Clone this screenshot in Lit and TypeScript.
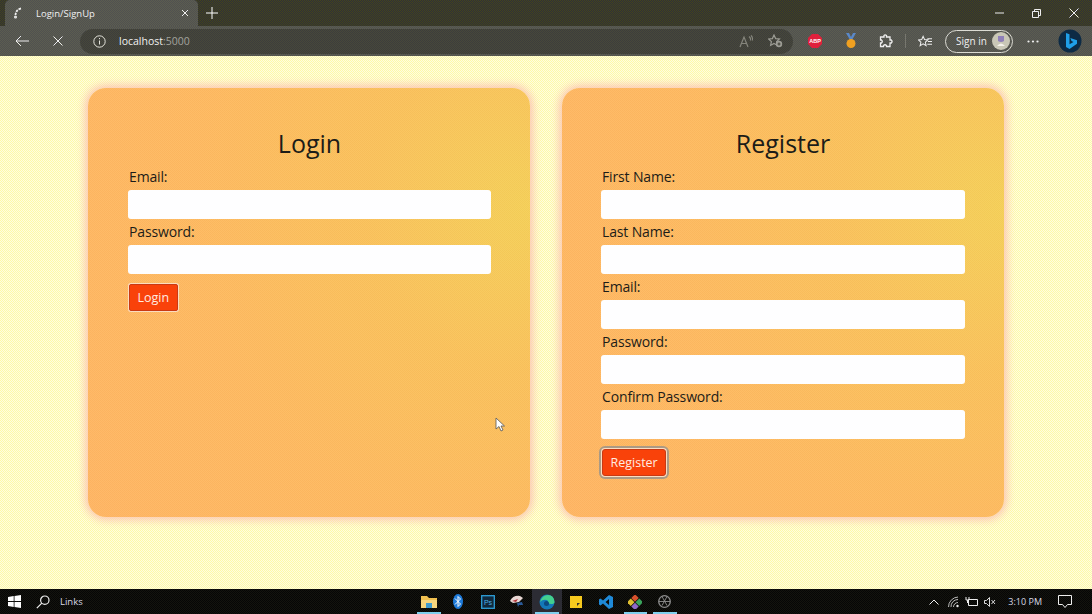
import { LitElement, html, svg, css } from 'lit'
import { customElement } from 'lit/decorators.js'

@customElement('app-root')
export class AppRoot extends LitElement {
  static styles = css`
    :host {
      display: flex;
      flex-direction: column;
      height: 100vh;
      overflow: hidden;
      position: relative;
      font-family: 'Open Sans', 'Noto Sans', sans-serif;
      background: #fdfbb5;
    }
    svg { display: block; }

    /* window chrome */
    .tabstrip {
      height: 26px;
      flex: none;
      display: flex;
      background: repeating-conic-gradient(#2f3038 0 25%, #44441c 0 50%) 0 0 / 2px 2px;
      color: #f0f0f0;
    }
    .tab {
      width: 193px;
      margin-left: 5px;
      display: flex;
      align-items: center;
      background: repeating-conic-gradient(#505150 0 25%, #5c5d50 0 50%) 0 0 / 2px 2px;
      border-radius: 5px 5px 0 0;
      font-size: 9.5px;
      padding: 0 9px 0 8px;
      box-sizing: border-box;
    }
    .tab span { flex: 1; margin-left: 13px; }
    .plus { width: 28px; display: flex; align-items: center; justify-content: center; }
    .winctl { margin-left: auto; display: flex; }
    .winctl div { width: 37px; height: 26px; display: flex; align-items: center; justify-content: center; }

    .toolbar {
      height: 30px;
      flex: none;
      display: flex;
      align-items: center;
      background: repeating-conic-gradient(#505150 0 25%, #5c5d50 0 50%) 0 0 / 2px 2px;
      color: #f0f0f0;
      box-sizing: border-box;
      padding-left: 12px;
    }
    .tool { display: flex; align-items: center; justify-content: center; flex: none; }
    .addr {
      width: 713px;
      height: 25px;
      margin-left: 5px;
      background: repeating-conic-gradient(#3c3d3c 0 25%, #48483a 0 50%) 0 0 / 2px 2px;
      border-radius: 13px;
      display: flex;
      align-items: center;
      font-size: 10.5px;
      padding-left: 13px;
      box-sizing: border-box;
    }
    .addr .url { margin-left: 13px; flex: 1; }
    .addr .url i { font-style: normal; color: #a3a39c; }
    .signin {
      width: 68px;
      height: 23px;
      margin-left: 13px;
      border: 1px solid #dcdcd4;
      border-radius: 12px;
      box-sizing: border-box;
      display: flex;
      align-items: center;
      justify-content: space-between;
      font-size: 10px;
      padding: 0 2px 0 10px;
      white-space: nowrap;
    }
    .avatar { width: 18px; height: 18px; border-radius: 50%; background: #c9c7b6; display: flex; align-items: center; justify-content: center; }

    /* page */
    .page {
      flex: 1;
      display: flex;
      justify-content: center;
      gap: 32px;
      padding-top: 32px;
      box-sizing: border-box;
      background: repeating-conic-gradient(#fffde0 0 25%, #fdf9a8 0 50%) 0 0 / 2px 2px;
    }
    .card {
      width: 442px;
      height: 429px;
      box-sizing: border-box;
      padding: 37px 39px 0 40px;
      border-radius: 18px;
      background:
        repeating-conic-gradient(rgba(255, 255, 255, 0.05) 0 25%, rgba(200, 120, 90, 0.04) 0 50%) 0 0 / 2px 2px,
        radial-gradient(circle at 100% 28%, #f5d056 0%, #fac25a 30%, #feb95f 62%, #ffb562 100%);
      box-shadow: 0 0 9px 3px #fcc6b4;
      color: #1c1c18;
    }
    .card.register { padding-left: 39px; }
    h2 {
      margin: 0 0 7px;
      font-size: 25px;
      line-height: 36px;
      font-weight: 400;
      text-align: center;
    }
    label {
      display: block;
      font-size: 14px;
      letter-spacing: -0.15px;
      line-height: 18px;
      padding-left: 1px;
      margin-bottom: 4px;
    }
    .input {
      height: 29px;
      background: #fefeff;
      border-radius: 3px;
      margin-bottom: 4px;
    }
    .btn {
      display: inline-flex;
      align-items: center;
      height: 27px;
      margin: 6px 0 0 1px;
      padding: 0 7.5px;
      background: #f9420a;
      color: #ffece2;
      border: 1px solid #c93a14;
      box-shadow: 0 0 0 1px #fbdcc0;
      border-radius: 2px;
      font-size: 12.5px;
      box-sizing: border-box;
    }
    .btn.focus { box-shadow: 0 0 0 1px #fbdcc0, 0 0 0 3px #ab9a84; border-radius: 3px; }

    /* taskbar */
    .taskbar {
      height: 25px;
      flex: none;
      display: flex;
      align-items: center;
      background: repeating-conic-gradient(#060606 0 25%, #14140e 0 50%) 0 0 / 2px 2px;
      color: #d8d8e4;
      font-size: 9.5px;
    }
    .tb-left { width: 414px; display: flex; align-items: center; flex: none; }
    .tb-left .links { margin-left: 10px; }
    .tb-icons { display: flex; flex: none; height: 25px; }
    .tb-icon {
      width: 29.5px;
      height: 25px;
      position: relative;
      display: flex;
      align-items: center;
      justify-content: center;
    }
    .tb-icon.open::after {
      content: '';
      position: absolute;
      left: 3px;
      right: 3px;
      bottom: 0;
      height: 2px;
      background: #7fd0ee;
    }
    .tb-icon.active { background: #2c2c34; }
    .tray { flex: 1; display: flex; align-items: center; justify-content: flex-end; }
    .time { margin: 0 16px 0 12px; white-space: nowrap; font-size: 9px; }

    .cursor { position: absolute; left: 495px; top: 417px; }
  `

  private _field(name: string) {
    return html`<label>${name}</label><div class="input"></div>`
  }

  private _chrome() {
    return html`
      <div class="tabstrip">
        <div class="tab">
          <svg width="10" height="12" viewBox="0 0 10 12" fill="none" stroke="#eee" stroke-width="1.8"><path d="M8 1.500Q3 2.500 2.500 8" stroke-dasharray="2.500 1" /><circle cx="2.500" cy="10" r=".6" /></svg>
          <span>Login/SignUp</span>
          <svg width="8" height="8" viewBox="0 0 8 8" stroke="#eee"><path d="M1 1l6 6M7 1l-6 6" /></svg>
        </div>
        <div class="plus"><svg width="12" height="12" viewBox="0 0 12 12" stroke="#fff"><path d="M6 0v12M0 6h12" /></svg></div>
        <div class="winctl">
          <div><svg width="9" height="2" stroke="#eee"><path d="M0 1h9" /></svg></div>
          <div><svg width="9" height="9" viewBox="0 0 9 9" fill="none" stroke="#eee"><path d="M.5 2.500h6v6h-6zM2.500 2.500v-2h6v6h-2" /></svg></div>
          <div><svg width="10" height="10" viewBox="0 0 10 10" stroke="#eee"><path d="M.5.5l9 9M9.500.5l-9 9" /></svg></div>
        </div>
      </div>
      <div class="toolbar">
        <div class="tool" style="width:20px"><svg width="14" height="12" viewBox="0 0 14 12" fill="none" stroke="#eee"><path d="M14 6H1M6 1L1 6l5 5" /></svg></div>
        <div class="tool" style="width:35px;margin-left:8px"><svg width="10" height="10" viewBox="0 0 10 10" stroke="#eee"><path d="M.5.5l9 9M9.500.5l-9 9" /></svg></div>
        <div class="addr">
          <svg width="13" height="13" viewBox="0 0 13 13" fill="none" stroke="#e4e4dc"><circle cx="6.500" cy="6.500" r="5.700" /><path d="M6.500 5.500v4M6.500 3v1.200" /></svg>
          <div class="url">localhost<i>:5000</i></div>
          <div class="tool" style="width:14px;margin-right:15px">
            <svg width="14" height="13" viewBox="0 0 14 13" fill="none" stroke="#85857c" stroke-width="1.200"><path d="M1 12L5 2l4 10M2.500 8.500h5M10 1.500q2 1.500 1.500 4M12 .5q2 2 1.500 5" /></svg>
          </div>
          <div class="tool" style="width:15px;margin-right:10px">
            <svg width="15" height="14" viewBox="0 0 15 14" fill="none" stroke="#9c9c94" stroke-width="1.200"><path d="M6 1l1.600 3.600 3.800.4-2.800 2.600.8 3.800L6 9.500 2.600 11.400l.8-3.800L.6 5l3.800-.4z" /><circle cx="11" cy="10" r="3.200" fill="#9c9c94" stroke="none" /><path d="M9.500 10h3M11 8.500v3" stroke="#424238" /></svg>
          </div>
        </div>
        <div class="tool" style="width:14px;margin-left:15px">
          <svg width="14" height="14" viewBox="0 0 14 14"><path d="M4 0h6l4 4v6l-4 4H4l-4-4V4z" fill="#e0203c" /><text x="7" y="9.200" font-size="5.500" font-weight="700" font-family="Liberation Sans" text-anchor="middle" fill="#fff">ABP</text></svg>
        </div>
        <div class="tool" style="width:14px;margin-left:22px">
          <svg width="14" height="16" viewBox="0 0 14 16"><path d="M2 0l4 7h2l4-7H9L7 4 5 0z" fill="#5a88c8" /><circle cx="7" cy="10.500" r="4.500" fill="#f0a020" /></svg>
        </div>
        <div class="tool" style="width:14px;margin-left:21px">
          <svg width="14" height="14" viewBox="0 0 14 14" fill="none" stroke="#eee" stroke-width="1.300"><path d="M5 1.500q1-1.300 2.500 0V3h3.500v3h1.300q1.500 1.500 0 3H11v3.500H7.500v-1q-1.500-1.500-3 0v1H1.500V9h1q1.500-1.500 0-3h-1V3H5z" /></svg>
        </div>
        <div class="tool" style="width:1px;height:14px;margin-left:12px;background:#77776f"></div>
        <div class="tool" style="width:14px;margin-left:12px">
          <svg width="15" height="13" viewBox="0 0 15 13" fill="none" stroke="#eee" stroke-width="1.100"><path d="M5.500 1l1.500 3.400 3.600.4-2.700 2.500.8 3.600-3.200-1.900-3.200 1.900.8-3.600L.4 4.800 4 4.400zM10 3.500h5M10.500 6.500h4.500M10 9.500h5" /></svg>
        </div>
        <div class="signin"><span>Sign in</span><div class="avatar"><svg width="10" height="12" viewBox="0 0 10 12"><path d="M2 1h6v5q-3 2-6 0z" fill="#8f80b8" /><path d="M1 11q4-5 8 0z" fill="#f4f2ea" /></svg></div></div>
        <div class="tool" style="width:12px;margin-left:14px">
          <svg width="12" height="3" viewBox="0 0 12 3" fill="#eee"><circle cx="1.500" cy="1.500" r="1.100" /><circle cx="6" cy="1.500" r="1.100" /><circle cx="10.500" cy="1.500" r="1.100" /></svg>
        </div>
        <div class="tool" style="width:24px;margin-left:19px">
          <svg width="24" height="24" viewBox="0 0 24 24"><circle cx="12" cy="12" r="11.500" fill="#0d2b45" /><path d="M8 4l3.500 1.300v10l4-2.300-2-1-1.200-3 6.700 2.300v3.500L11.500 20 8 18z" fill="#1f9fe8" /></svg>
        </div>
      </div>
    `
  }

  private _taskbar() {
    const sq = (c: string) => svg`<rect width="7" height="7" fill=${c} />`
    return html`
      <div class="taskbar">
        <div class="tb-left">
          <div class="tool" style="width:13px;margin-left:8px">
            <svg width="13" height="13" viewBox="0 0 13 13" fill="#fff"><path d="M0 2l5.700-.9v5H0zM6.500 1L13 0v6.100H6.500zM0 6.900h5.700v5L0 11zM6.500 6.900H13V13l-6.500-1z" /></svg>
          </div>
          <div class="tool" style="width:14px;margin-left:15px">
            <svg width="14" height="14" viewBox="0 0 14 14" fill="none" stroke="#eee" stroke-width="1.200"><circle cx="8.800" cy="5.200" r="4.200" /><path d="M5.800 8.200L.8 13.200" /></svg>
          </div>
          <span class="links">Links</span>
        </div>
        <div class="tb-icons">
          <div class="tb-icon open">
            <svg width="16" height="14" viewBox="0 0 16 14"><path d="M0 1h6l2 2h8v10H0z" fill="#f0c050" /><rect y="5" width="16" height="8" fill="#f7d67e" /><rect x="5" y="8" width="6" height="5" fill="#3f9bd0" /></svg>
          </div>
          <div class="tb-icon">
            <svg width="10" height="15" viewBox="0 0 10 15"><ellipse cx="5" cy="7.500" rx="5" ry="7.500" fill="#1d79d8" /><path d="M2 4.500l5.500 5.500L5 12.500v-10L7.500 5 2 10.500" fill="none" stroke="#fff" /></svg>
          </div>
          <div class="tb-icon">
            <svg width="14" height="14" viewBox="0 0 14 14"><rect x=".7" y=".7" width="12.600" height="12.600" fill="#10283c" stroke="#2e9fd8" stroke-width="1.300" /><text x="7" y="9.800" font-size="7" font-family="Liberation Sans" text-anchor="middle" fill="#4cb4e8">Ps</text></svg>
          </div>
          <div class="tb-icon">
            <svg width="16" height="13" viewBox="0 0 16 13"><path d="M1 6q3-6 10-5l3 2-4 4-6 1z" fill="#e8d8d4" /><path d="M3 6l6-2-2 3z" fill="#b03038" /><path d="M8 8l5-1 1 3-4 0-1 2z" fill="#2a5a98" /></svg>
          </div>
          <div class="tb-icon active open">
            <svg width="16" height="16" viewBox="0 0 16 16"><circle cx="8" cy="8" r="7.500" fill="#1378b8" /><path d="M1 8Q3 1 9 1q6 0 6.500 7 0 2-3.500 2-3 0-3-2.500 0-1.500-1.500-1.500Q4 5 1 8z" fill="#43cf8f" /><circle cx="7.500" cy="9.500" r="2.500" fill="#0c4a80" /></svg>
          </div>
          <div class="tb-icon">
            <svg width="12" height="12" viewBox="0 0 12 12"><rect width="12" height="12" fill="#f6c91e" /><path d="M7 10V7h3z" fill="#333" /></svg>
          </div>
          <div class="tb-icon">
            <svg width="14" height="14" viewBox="0 0 14 14"><path d="M10 0l4 2v10l-4 2-6-5.500L1.500 10.500 0 9.500V4.500l1.500-1L4 5.500zM10 4L6.500 7 10 10z" fill="#1f8ad8" /></svg>
          </div>
          <div class="tb-icon open">
            <svg width="14" height="14" viewBox="-7 -7 14 14"><g transform="rotate(45)"><g transform="translate(-5.500 -5.500) scale(.75)">${sq('#d8522c')}</g><g transform="translate(.5 -5.500) scale(.75)">${sq('#3aa55c')}</g><g transform="translate(-5.500 .5) scale(.75)">${sq('#e0c030')}</g><g transform="translate(.5 .5) scale(.75)">${sq('#8f6ac8')}</g></g></svg>
          </div>
          <div class="tb-icon open">
            <svg width="13" height="13" viewBox="0 0 13 13" fill="none" stroke="#8d8d8d" stroke-width="1.300"><circle cx="6.500" cy="6.500" r="5.800" /><path d="M4 1.500l5 9M9 1.500l-5 9M1 6.500h11" stroke-width=".9" /></svg>
          </div>
        </div>
        <div class="tray">
          <div class="tool" style="width:10px;margin-right:9px">
            <svg width="10" height="6" viewBox="0 0 10 6" fill="none" stroke="#eee"><path d="M.5 5.500L5 1l4.500 4.500" /></svg>
          </div>
          <div class="tool" style="width:12px;margin-right:5px">
            <svg width="12" height="12" viewBox="0 0 12 12" fill="none" stroke="#bbb"><path d="M.5 11A10 10 0 0 1 10 1M3 11a7 7 0 0 1 7-7.500M5.500 11A4.500 4.500 0 0 1 10 6.500" /><circle cx="9.500" cy="10" r="1.200" fill="#eee" stroke="none" /></svg>
          </div>
          <div class="tool" style="width:13px;margin-right:6px">
            <svg width="13" height="11" viewBox="0 0 13 11" fill="none" stroke="#eee"><path d="M3.500 3.500h9v6h-9zM1 1v3h3V1M2.500 4v3" /></svg>
          </div>
          <div class="tool" style="width:12px">
            <svg width="12" height="10" viewBox="0 0 12 10" fill="none" stroke="#ddd"><path d="M.5 3.500h2L5.500.5v9l-3-3h-2zM7.500 3l3.500 4M11 3L7.500 7" /></svg>
          </div>
          <span class="time">3:10 PM</span>
          <div class="tool" style="width:14px;margin-right:20px">
            <svg width="14" height="13" viewBox="0 0 14 13" fill="none" stroke="#eee"><path d="M.5.500h13v9H9.500L7 12.500 4.500 9.500h-4z" /></svg>
          </div>
        </div>
      </div>
    `
  }

  render() {
    return html`
      ${this._chrome()}
      <div class="page">
        <div class="card">
          <h2>Login</h2>
          ${this._field('Email:')}
          ${this._field('Password:')}
          <div class="btn">Login</div>
        </div>
        <div class="card register">
          <h2>Register</h2>
          ${this._field('First Name:')}
          ${this._field('Last Name:')}
          ${this._field('Email:')}
          ${this._field('Password:')}
          ${this._field('Confirm Password:')}
          <div class="btn focus">Register</div>
        </div>
      </div>
      ${this._taskbar()}
      <svg class="cursor" width="11" height="16" viewBox="0 0 11 16"><path d="M1 1v11l3-2.500 2 4.500 2-1-2-4h3.500z" fill="#fff" stroke="#555" stroke-width=".8" /></svg>
    `
  }
}
